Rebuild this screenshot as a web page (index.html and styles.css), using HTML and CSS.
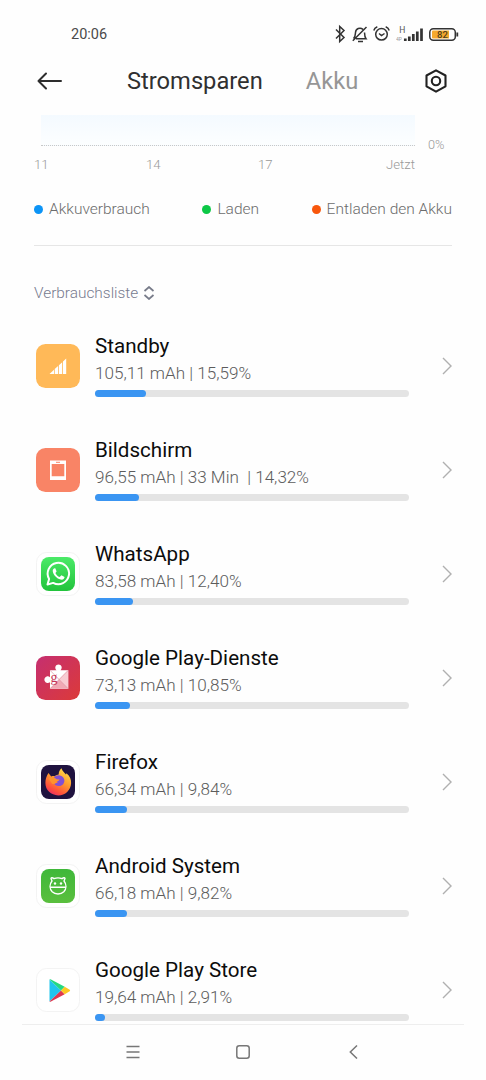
FILE: index.html
```html
<!DOCTYPE html>
<html lang="de">
<head>
  <meta charset="UTF-8">
  <title>Stromsparen</title>
  <link rel="stylesheet" href="styles.css">
</head>
<body>
  <div class="screen">
    <div class="status-bar">
      <span class="time">20:06</span>
      <svg class="status-icons" width="126" height="22" viewBox="0 0 126 22" fill="none" stroke="#333" stroke-width="1.5">
        <path d="M2 6.500l8 8-4.300 4V3.500l4.300 4-8 8"/>
        <path d="M19.500 15.700c1.800-1.500 1.800-3.500 2-6.200.3-4 4.500-5.500 7.500-3.200M30.500 9.500c.1 3 .3 4.700 1.500 6.200H22M24 18.600h5M18.800 17.700L32.500 4"/>
        <circle cx="47.500" cy="11.300" r="5.800"/>
        <path d="M45 10.500l2.500 2 3-2M39.800 7.500c.5-2 1.700-3 3.500-3.700M55.200 7.500c-.5-2-1.700-3-3.500-3.700"/>
        <path d="M71.300 15.500v2.500M75.300 13.500v4.500M79.300 11v7M83.300 8.500v9.500M87.500 5.500v12.500" stroke-width="2.700"/>
        <rect x="95.800" y="5.700" width="25.500" height="11.600" rx="3.500"/>
        <path d="M123.300 9.500v4" stroke-width="1.800"/>
        <path d="M98 8.500q0-1 1-1h16v8h-16q-1 0-1-1z" fill="#f5a92d" stroke="none"/>
        <text class="net-type" x="68.300" y="10">H</text>
        <text class="net-lte" x="65" y="17.500">4P</text>
        <text class="battery-text" x="108.500" y="15">82</text>
      </svg>
    </div>

    <div class="header">
      <svg class="back" width="26" height="20" viewBox="0 0 26 20" fill="none" stroke="#2d2d2d" stroke-width="2" stroke-linecap="round" stroke-linejoin="round">
        <path d="M9 2.500L1.500 10 9 17.500M1.500 10H24"/>
      </svg>
      <span class="tab active">Stromsparen</span>
      <span class="tab">Akku</span>
      <svg class="settings" width="24" height="26" viewBox="0 0 24 26" fill="none" stroke="#222" stroke-width="2.100" stroke-linejoin="round">
        <path d="M12 2.300l9.500 5.200v10.800L12 23.700l-9.500-5.400V7.500z"/>
        <circle cx="12" cy="13" r="4.200"/>
      </svg>
    </div>

    <div class="chart">
      <div class="chart-area"></div>
      <span class="chart-percent">0%</span>
    </div>
    <div class="chart-axis">
      <span>11</span><span>14</span><span>17</span><span>Jetzt</span>
    </div>

    <div class="legend">
      <span class="legend-item"><i class="dot blue"></i>Akkuverbrauch</span>
      <span class="legend-item"><i class="dot green"></i>Laden</span>
      <span class="legend-item"><i class="dot orange"></i>Entladen den Akku</span>
    </div>

    <div class="list-title">
      <span>Verbrauchsliste</span>
      <svg width="12" height="14" viewBox="0 0 12 14" fill="none" stroke="#777b89" stroke-width="1.700">
        <path d="M1.500 5L6 1l4.500 4M1.500 9L6 13l4.500-4"/>
      </svg>
    </div>

    <div class="list">
      <div class="row">
        <svg class="icon" viewBox="0 0 44 44">
          <rect width="44" height="44" rx="9.500" fill="#ffb958"/>
          <path d="M13.500 30l4.500-4.200V30zM18.700 25l3.400-3.100V30h-3.400zM22.900 21.200l3.300-3V30h-3.300zM27 17.400l3.200-3V30H27z" fill="#fff"/>
        </svg>
        <div class="info">
          <div class="name">Standby</div>
          <div class="usage">105,11 mAh | 15,59%</div>
          <div class="bar"><div class="fill" style="width: 16.2%"></div></div>
        </div>
        <svg class="chevron" viewBox="0 0 10 18"><path d="M1 1l8 8-8 8"/></svg>
      </div>

      <div class="row">
        <svg class="icon" viewBox="0 0 44 44">
          <rect width="44" height="44" rx="9.500" fill="#f98466"/>
          <path d="M14 12.500h16v19.500H14zM15.700 16v12.300h12.600V16z" fill="#fff" fill-rule="evenodd"/>
          <path d="M20 14.300h4" stroke="#f98466"/>
        </svg>
        <div class="info">
          <div class="name">Bildschirm</div>
          <div class="usage">96,55 mAh | 33 Min&nbsp; | 14,32%</div>
          <div class="bar"><div class="fill" style="width: 14.1%"></div></div>
        </div>
        <svg class="chevron" viewBox="0 0 10 18"><path d="M1 1l8 8-8 8"/></svg>
      </div>

      <div class="row">
        <svg class="icon" viewBox="0 0 44 44">
          <defs>
            <linearGradient id="wa" x1="0" y1="0" x2="0" y2="1">
              <stop offset="0" stop-color="#4bea68"/>
              <stop offset="1" stop-color="#22c33c"/>
            </linearGradient>
          </defs>
          <rect class="frame" x=".5" y=".5" width="43" height="43" rx="10"/>
          <rect x="5" y="5" width="34" height="34" rx="8" fill="url(#wa)"/>
          <path d="M11.500 32.500l1.600-5.600a10.700 10.700 0 1 1 4.100 4z" fill="none" stroke="#fff" stroke-width="2" stroke-linejoin="round"/>
          <path d="M18.500 16.200c-1.300.3-2 1.700-1.700 3.200.8 3.800 4 7 7.800 8.100 2 .5 3.800-.5 4-2.500l-3.200-1.700-1.700 1.700c-1.900-.7-3.500-2.200-4.300-4.100l1.200-1.500-1.300-3.100z" fill="#fff"/>
        </svg>
        <div class="info">
          <div class="name">WhatsApp</div>
          <div class="usage">83,58 mAh | 12,40%</div>
          <div class="bar"><div class="fill" style="width: 12.1%"></div></div>
        </div>
        <svg class="chevron" viewBox="0 0 10 18"><path d="M1 1l8 8-8 8"/></svg>
      </div>

      <div class="row">
        <svg class="icon" viewBox="0 0 44 44">
          <defs>
            <linearGradient id="gps" x1="0" y1="0" x2="1" y2="1">
              <stop offset="0" stop-color="#c52f70"/>
              <stop offset="1" stop-color="#dc3a39"/>
            </linearGradient>
          </defs>
          <rect width="44" height="44" rx="9.500" fill="url(#gps)"/>
          <path d="M14 14.300h6.500c-1.200-1.300-1.400-2.600-1.100-3.600.9-2.900 5.300-2.900 6.200 0 .3 1.200-.1 2.400-1.100 3.600h7.700v18.400H14v-6.500c-1.200.9-2.500 1-3.500.5-2.900-1.200-2.700-5.300.2-6.200 1.200-.4 2.400-.1 3.300.7z" fill="#fff"/>
          <path d="M32.200 14.300v18.400l-9.100-9.200z" fill="#f8ccd2"/>
          <path d="M14 32.700l9.100-9.200 9.100 9.200z" fill="#f0a9b4"/>
          <path d="M14 14.300l18.200 18.400M32.200 14.300L14 32.700" stroke="#d98291" stroke-width=".6"/>
          <text class="g-mark" x="18" y="26.300">g</text>
        </svg>
        <div class="info">
          <div class="name">Google Play-Dienste</div>
          <div class="usage">73,13 mAh | 10,85%</div>
          <div class="bar"><div class="fill" style="width: 11.1%"></div></div>
        </div>
        <svg class="chevron" viewBox="0 0 10 18"><path d="M1 1l8 8-8 8"/></svg>
      </div>

      <div class="row">
        <svg class="icon" viewBox="0 0 44 44">
          <defs>
            <linearGradient id="fx" x1=".8" y1="0" x2=".25" y2="1">
              <stop offset="0" stop-color="#ffe14a"/>
              <stop offset=".45" stop-color="#ff9a2e"/>
              <stop offset=".8" stop-color="#ff4f3c"/>
              <stop offset="1" stop-color="#e92c68"/>
            </linearGradient>
          </defs>
          <rect class="frame" x=".5" y=".5" width="43" height="43" rx="10"/>
          <rect x="5" y="5" width="34" height="34" rx="8" fill="#1f123f"/>
          <path d="M12.500 13l2.700 3.500c1.300-.5 2.300-.5 3.300-.3 1.700-1.300 3-1.600 4.200-1.800 0-2.600 1-4.700 2.800-6.200.8 3.200 3 4.200 4.500 6.300l.5-1.300c3.500 3 4.800 6 4.600 10-.3 6.800-5.800 12.200-12.900 12.200-7.200 0-12.800-5.300-12.800-12.300 0-3.800 1.100-7.300 3.100-10.100z" fill="url(#fx)"/>
          <path d="M18 17.500c1.500-2 4-2.600 6-2.100 2.800.6 4.600 3 4.400 5.700-.3 3.300-3 5.200-5.900 5-2.500-.2-4.300-1.600-4.800-3.300 1.500.7 2.900.3 4.300-.6-2-.3-2.300-1.400-1-2.300z" fill="#8150d5"/>
          <path d="M12.500 18.500c2.500-1.500 5.500-1.200 8 .7l3 .4c-.5 1.800-3 1.800-3.400 3.100-1 1.300-2.500 1.600-4 1z" fill="#ff922d"/>
        </svg>
        <div class="info">
          <div class="name">Firefox</div>
          <div class="usage">66,34 mAh | 9,84%</div>
          <div class="bar"><div class="fill" style="width: 10.1%"></div></div>
        </div>
        <svg class="chevron" viewBox="0 0 10 18"><path d="M1 1l8 8-8 8"/></svg>
      </div>

      <div class="row">
        <svg class="icon" viewBox="0 0 44 44">
          <defs>
            <linearGradient id="as" x1="0" y1="0" x2="0" y2="1">
              <stop offset="0" stop-color="#3fb83a"/>
              <stop offset="1" stop-color="#5abf3e"/>
            </linearGradient>
          </defs>
          <rect class="frame" x=".5" y=".5" width="43" height="43" rx="10"/>
          <rect x="5" y="5" width="34" height="34" rx="8" fill="url(#as)"/>
          <g fill="none" stroke="#fff" stroke-width="1.400" stroke-linecap="round" stroke-linejoin="round">
            <path d="M16 17L15 14.500q.5-1.500 3 .2c2.500-1 5.500-1 8 0q2.500-1.700 3-.2L28 17c2.700 3.400 2.500 7.800-.2 10.700-3 3-8.600 3-11.600 0-2.700-2.900-2.900-7.300-.2-10.700zM14.300 23.200h15.400"/>
          </g>
          <circle cx="19" cy="19.500" r="1.200" fill="#fff"/>
          <circle cx="25" cy="19.500" r="1.200" fill="#fff"/>
        </svg>
        <div class="info">
          <div class="name">Android System</div>
          <div class="usage">66,18 mAh | 9,82%</div>
          <div class="bar"><div class="fill" style="width: 10.1%"></div></div>
        </div>
        <svg class="chevron" viewBox="0 0 10 18"><path d="M1 1l8 8-8 8"/></svg>
      </div>

      <div class="row">
        <svg class="icon" viewBox="0 0 44 44">
          <rect class="frame" x=".5" y=".5" width="43" height="43" rx="10"/>
          <path d="M13.500 11.500v22L25 22.500z" fill="#20c5ee"/>
          <path d="M13.500 11.500q.5-.5 1.500 0l13.700 7.300L25 22.500z" fill="#25d982"/>
          <path d="M13.500 33.500q.5.500 1.500 0l13.700-7.300L25 22.500z" fill="#de3850"/>
          <path d="M28.700 18.800l5 2.900q.9.800 0 1.600l-5 2.900L25 22.500z" fill="#fdc822"/>
        </svg>
        <div class="info">
          <div class="name">Google Play Store</div>
          <div class="usage">19,64 mAh | 2,91%</div>
          <div class="bar"><div class="fill" style="width: 3.1%"></div></div>
        </div>
        <svg class="chevron" viewBox="0 0 10 18"><path d="M1 1l8 8-8 8"/></svg>
      </div>
    </div>

    <div class="nav-bar">
      <svg width="14" height="14" viewBox="0 0 14 14"><path d="M.5 1.500h13M.5 7h13M.5 12.500h13"/></svg>
      <svg width="14" height="14" viewBox="0 0 14 14"><rect x=".8" y=".8" width="12.400" height="12.400" rx="2.500"/></svg>
      <svg width="14" height="14" viewBox="0 0 14 14"><path d="M11 .5L4.300 7l6.700 6.500"/></svg>
    </div>
  </div>
</body>
</html>
```
FILE: styles.css
```css
* {
  box-sizing: border-box;
}
body {
  margin: 0;
  background: #fefefe;
  font-family: Roboto, sans-serif;
}
.screen {
  height: 1080px;
  display: flex;
  flex-direction: column;
  overflow: hidden;
}
svg {
  display: block;
  flex: none;
}

/* status bar */
.status-bar {
  height: 56px;
  padding: 12px 26px 0 71px;
  display: flex;
  align-items: center;
  justify-content: space-between;
  flex: none;
}
.time {
  font-size: 14.5px;
  color: #4a4a4a;
}
.status-icons text {
  fill: #555;
  stroke: none;
}
.net-type {
  font-size: 8.5px;
  text-anchor: middle;
}
.net-lte {
  font-size: 5px;
  text-anchor: middle;
  opacity: 0.6;
}
.status-icons .battery-text {
  font-size: 9.5px;
  font-weight: 500;
  text-anchor: middle;
  fill: #50401c;
}

/* header */
.header {
  height: 59px;
  padding: 0 38px 9px 37px;
  display: flex;
  align-items: center;
  flex: none;
}
.tab {
  font-size: 23.7px;
  line-height: 30px;
  color: #969696;
}
.tab.active {
  color: #303030;
  margin: 0 43px 0 64px;
}
.settings {
  margin-left: auto;
}

/* chart */
.chart {
  height: 42px;
  padding-left: 41px;
  display: flex;
  flex: none;
  font-weight: 300;
}
.chart-area {
  width: 374px;
  height: 31px;
  background: linear-gradient(#f4faff, #fcfeff);
  border-bottom: 1px dotted #c8c8c8;
}
.chart-percent {
  margin: 21px 0 0 13px;
  font-size: 12.7px;
  line-height: 18px;
  color: #999;
}
.chart-axis {
  width: 381px;
  margin-left: 34px;
  display: grid;
  grid-template-columns: 112px 112px 1fr auto;
  flex: none;
  font-size: 13.2px;
  font-weight: 300;
  line-height: 16px;
  color: #999;
}

/* legend */
.legend {
  height: 73px;
  margin: 0 34px;
  padding-top: 26px;
  display: flex;
  justify-content: space-between;
  flex: none;
  border-bottom: 1px solid #e6e6e6;
}
.legend-item {
  height: 20px;
  display: flex;
  align-items: center;
  font-size: 15.5px;
  font-weight: 300;
  color: #6c6c6c;
}
.dot {
  width: 9px;
  height: 9px;
  margin-right: 6px;
  border-radius: 50%;
}
.blue {
  background: #0c94f6;
}
.green {
  background: #0cc846;
}
.orange {
  background: #f8570c;
}

/* usage list */
.list-title {
  height: 68px;
  padding: 37px 34px 0;
  display: flex;
  align-items: flex-start;
  flex: none;
  font-size: 15.4px;
  font-weight: 300;
  line-height: 20px;
  color: #777b8f;
}
.list-title svg {
  margin: 3px 0 0 5px;
}
.list {
  flex: 1;
  overflow: hidden;
}
.row {
  height: 104px;
  padding: 0 34px 0 36px;
  display: flex;
  align-items: center;
}
.icon {
  width: 44px;
  height: 44px;
}
.frame {
  fill: #fff;
  stroke: #f3f3f3;
}
.g-mark {
  font: 14px "Liberation Serif", serif;
  fill: #c53556;
  text-anchor: middle;
}
.info {
  width: 314px;
  margin-left: 15px;
  padding-bottom: 3px;
}
.name {
  font-size: 20.6px;
  line-height: 28px;
  color: #0c0c0c;
}
.usage {
  margin-top: 1px;
  font-size: 17.1px;
  font-weight: 300;
  line-height: 24px;
  color: #5c5c5c;
  white-space: nowrap;
}
.bar {
  height: 7px;
  margin-top: 5px;
  border-radius: 4px;
  background: #e4e4e4;
}
.fill {
  height: 7px;
  border-radius: 4px;
  background: #3a95f2;
}
.chevron {
  width: 10px;
  height: 18px;
  margin-left: auto;
  fill: none;
  stroke: #b0b0b0;
  stroke-width: 1.4;
}

/* navigation bar */
.nav-bar {
  height: 56px;
  margin: 0 22px;
  padding: 0 104px 1px;
  display: flex;
  align-items: center;
  justify-content: space-between;
  flex: none;
  border-top: 1px solid #eee;
}
.nav-bar svg {
  fill: none;
  stroke: #777;
  stroke-width: 1.5;
}
```
